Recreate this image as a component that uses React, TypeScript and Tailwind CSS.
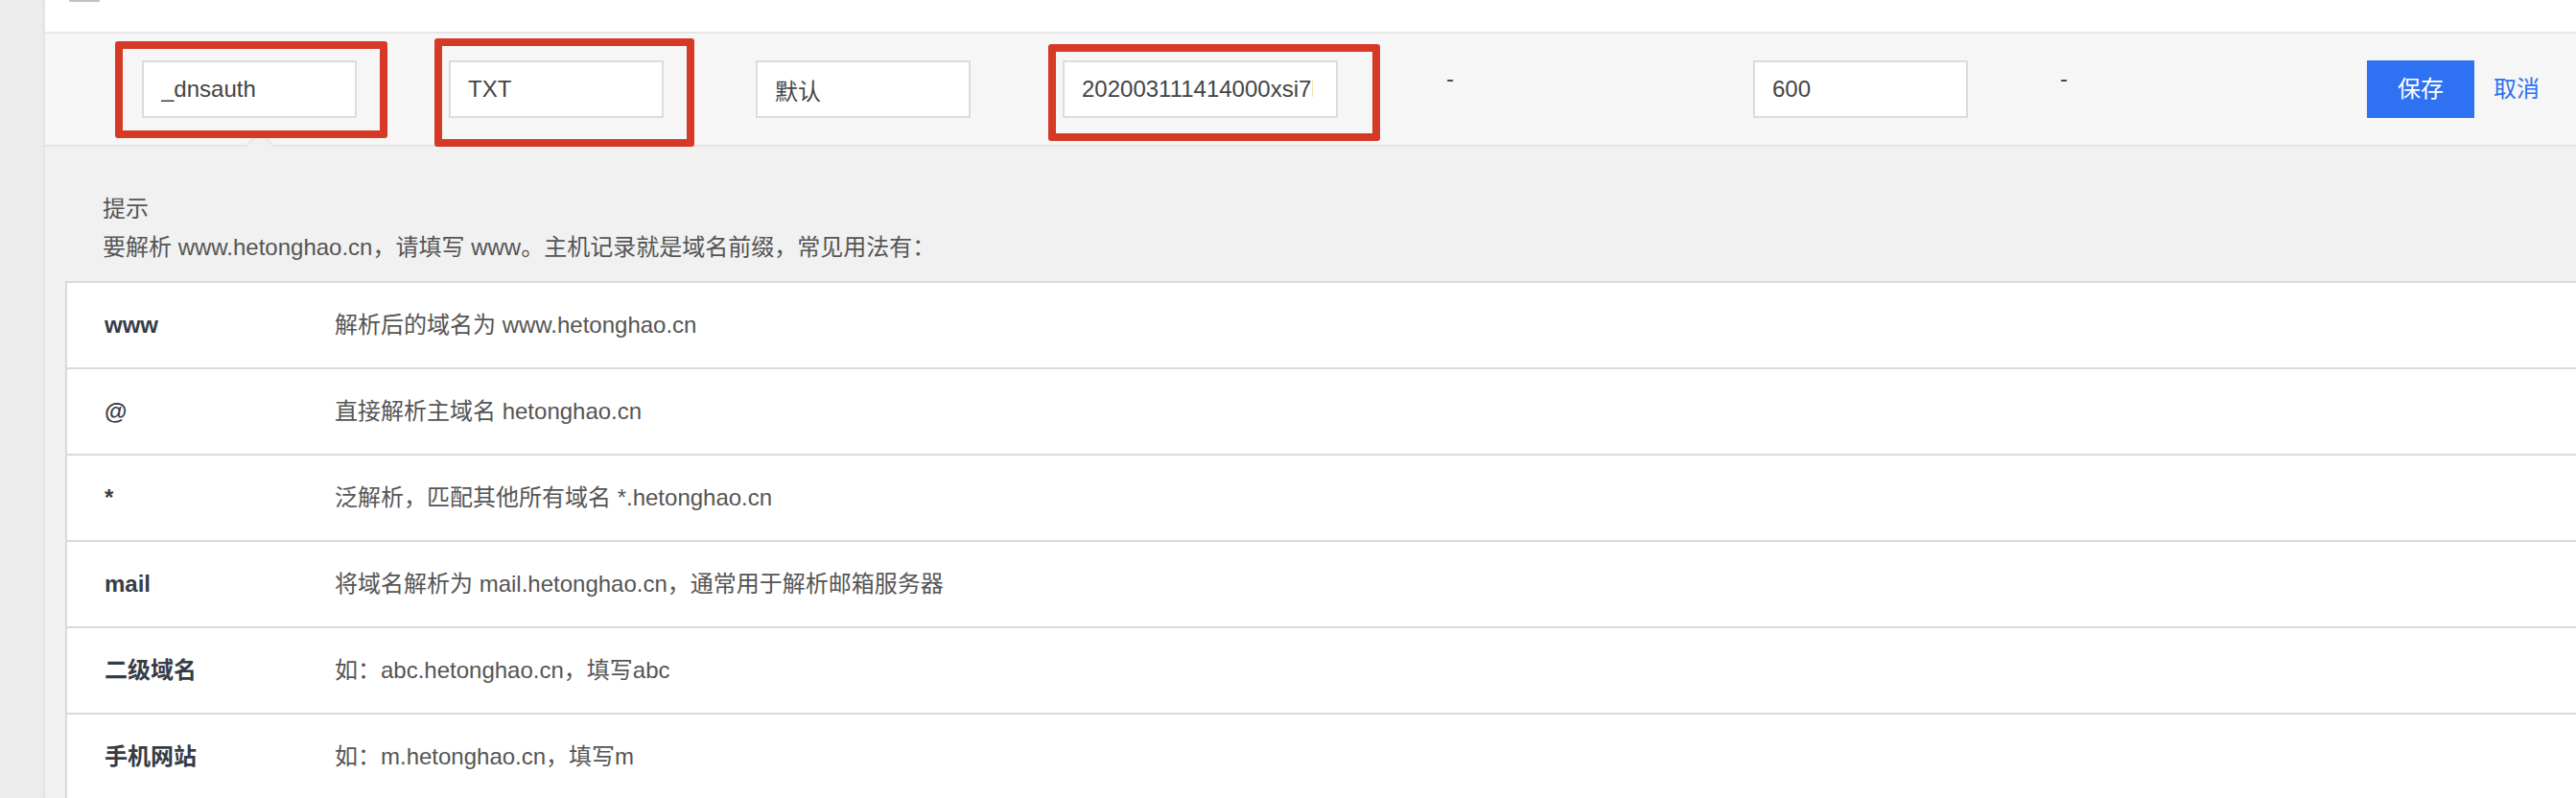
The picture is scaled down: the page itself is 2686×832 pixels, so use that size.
import React from "react";

const rows = [
  { host: "www", desc: "解析后的域名为 www.hetonghao.cn" },
  { host: "@", desc: "直接解析主域名 hetonghao.cn" },
  { host: "*", desc: "泛解析，匹配其他所有域名 *.hetonghao.cn" },
  { host: "mail", desc: "将域名解析为 mail.hetonghao.cn，通常用于解析邮箱服务器" },
  { host: "二级域名", desc: "如：abc.hetonghao.cn，填写abc" },
  { host: "手机网站", desc: "如：m.hetonghao.cn，填写m" },
];

function Field({ value, tight }: { value: string; tight?: boolean }) {
  return (
    <input
      readOnly
      value={value}
      className={
        tight
          ? "h-[60px] w-full border-2 border-[#dcdcdc] bg-white pl-[18px] pr-[24px] text-[24px] text-[#444] outline-none"
          : "h-[60px] w-full border-2 border-[#dcdcdc] bg-white px-[18px] text-[24px] text-[#444] outline-none"
      }
    />
  );
}

export default function App() {
  return (
    <div className="relative flex h-[832px] w-[2686px] overflow-hidden bg-[#ececec] font-['Liberation_Sans','Noto_Sans_CJK_SC',sans-serif]">
      <div className="w-[47px] shrink-0 bg-[#ececec] shadow-[inset_-3px_0_4px_-2px_rgba(0,0,0,0.06)]" />

      <div className="flex flex-1 flex-col bg-white">
        {/* top strip */}
        <div className="h-[35px] shrink-0 border-b-2 border-[#e6e6e6] bg-white">
          <div className="ml-[25px] h-[2px] w-[32px] bg-[#c2c2c2]" />
        </div>

        {/* edit row */}
        <div className="flex h-[118px] shrink-0 items-start border-b-2 border-[#e6e6e6] bg-[#f6f6f6] pl-[101px] pt-[28px] text-[24px] text-[#444]">
          <div className="w-[320px] shrink-0">
            <div className="w-[224px]">
              <Field value="_dnsauth" />
            </div>
          </div>
          <div className="w-[320px] shrink-0">
            <div className="w-[224px]">
              <Field value="TXT" />
            </div>
          </div>
          <div className="w-[320px] shrink-0">
            <div className="w-[224px]">
              <Field value="默认" />
            </div>
          </div>
          <div className="w-[320px] shrink-0">
            <div className="w-[287px]">
              <Field tight value="202003111414000xsi7lq1k5z8u3n0h2v6m4c" />
            </div>
          </div>
          <div className="w-[400px] shrink-0 pl-[80px] leading-[38px]">-</div>
          <div className="w-[320px] shrink-0">
            <div className="w-[224px]">
              <Field value="600" />
            </div>
          </div>
          <div className="w-[320px] shrink-0 leading-[38px]">-</div>
          <div className="flex items-center gap-[20px]">
            <button className="h-[60px] w-[112px] bg-[#2e71f3] text-[24px] text-white">保存</button>
            <span className="text-[24px] text-[#2e71f3]">取消</span>
          </div>
        </div>

        {/* tips popover */}
        <div className="relative flex-1 bg-[#f1f1f1] pl-[21px] pt-[45px]">
          <div className="absolute left-[213px] top-[-12px] h-[22px] w-[22px] rotate-45 border-l-2 border-t-2 border-[#e2e6ee] bg-[#f1f1f1]" />
          <div className="pl-[39px] text-[24px] leading-[40px] text-[#555]">
            <div>提示</div>
            <div>要解析 www.hetonghao.cn，请填写 www。主机记录就是域名前缀，常见用法有：</div>
          </div>

          <div className="mt-[15px] border-l-2 border-t-2 border-[#dadade] bg-white">
            {rows.map((r) => (
              <div key={r.host} className="flex h-[90px] items-center border-b-2 border-[#dadade] text-[24px]">
                <div className="w-[279px] shrink-0 pl-[39px] font-bold text-[#363c47]">{r.host}</div>
                <div className="text-[#555]">{r.desc}</div>
              </div>
            ))}
          </div>
        </div>
      </div>

      {/* annotation boxes */}
      <div className="absolute left-[120px] top-[43px] h-[101px] w-[284px] rounded-[3px] border-[8px] border-[#d53a27]" />
      <div className="absolute left-[453px] top-[40px] h-[113px] w-[271px] rounded-[3px] border-[8px] border-[#d53a27]" />
      <div className="absolute left-[1093px] top-[46px] h-[101px] w-[346px] rounded-[3px] border-[8px] border-[#d53a27]" />
    </div>
  );
}
